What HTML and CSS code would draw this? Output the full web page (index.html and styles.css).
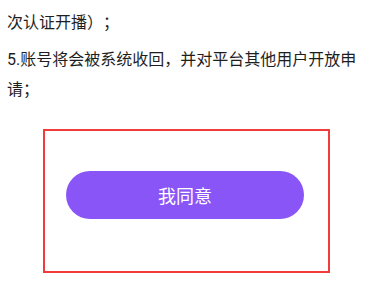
FILE: index.html
```html
<!DOCTYPE html>
<html lang="zh-CN">
<head>
<meta charset="utf-8">
<link rel="stylesheet" href="styles.css">
</head>
<body>
<div class="content">
  <p class="para">次认证开播）；</p>
  <p class="para">5.账号将会被系统收回，并对平台其他用户开放申请；</p>
  <div class="agree-box">
    <button class="agree-btn">我同意</button>
  </div>
</div>
</body>
</html>
```
FILE: styles.css
```css
html, body {
  margin: 0;
  padding: 0;
  background: #ffffff;
}
body {
  font-family: Roboto, "Noto Sans CJK SC", sans-serif;
  color: #1e1e1e;
  width: 368px;
  height: 281px;
  overflow: hidden;
  text-spacing-trim: space-all;
}
.content {
  padding: 8px 7px 0 7px;
}
.para {
  margin: 0 0 7px 0;
  font-size: 16px;
  line-height: 30px;
}
.agree-box {
  box-sizing: border-box;
  width: 287px;
  height: 144px;
  margin: 24px 0 0 36px;
  border: 2px solid #f23c3c;
  padding: 40px 24px 0 21px;
}
.agree-btn {
  display: block;
  width: 100%;
  height: 48px;
  border: none;
  border-radius: 24px;
  background: #8a55f6;
  color: #ffffff;
  font-family: Roboto, "Noto Sans CJK SC", sans-serif;
  font-size: 18px;
  padding: 0;
}
```
